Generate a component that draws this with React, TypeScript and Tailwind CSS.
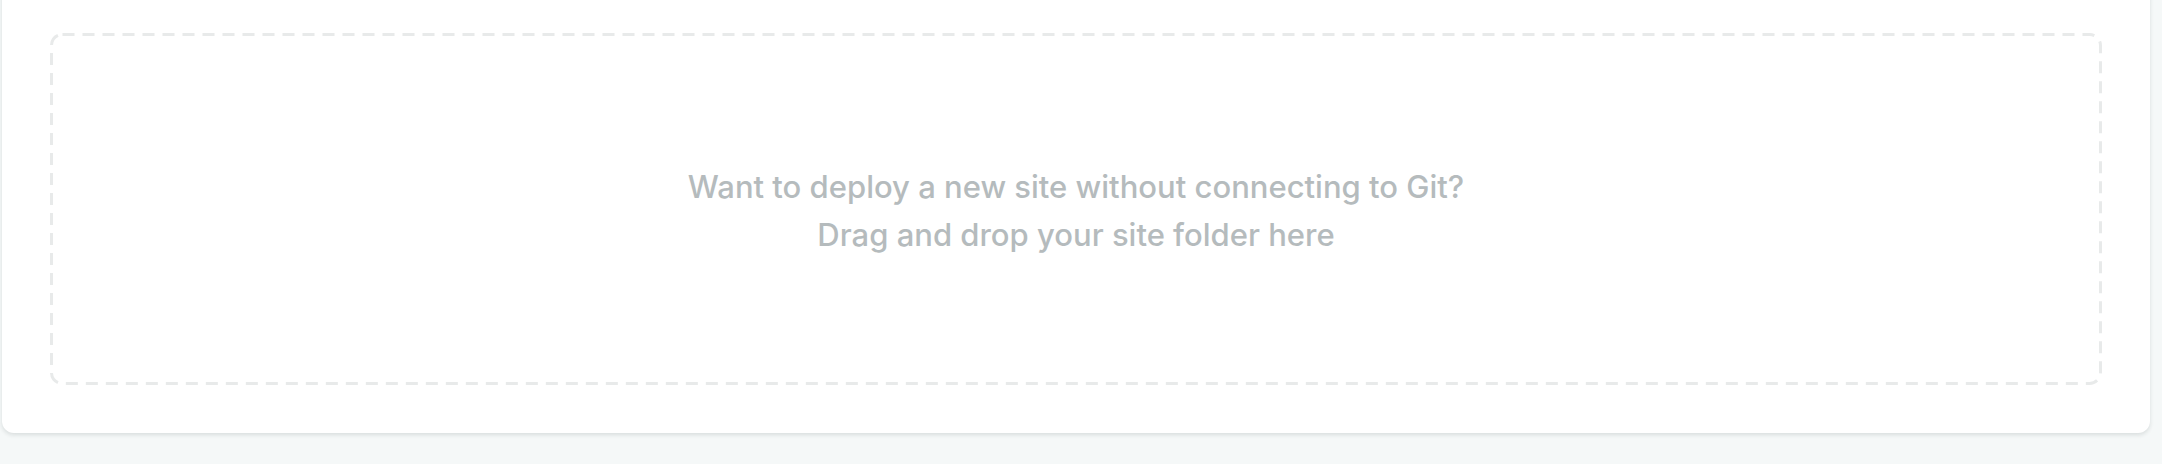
import React from "react";

export default function App() {
  return (
    <div className="w-[2162px] h-[464px] bg-[#f5f8f8] overflow-hidden" style={{ fontFamily: "Inter, 'Noto Sans', sans-serif" }}>
      <div className="ml-[2px] mr-[12px] -mt-[16px] bg-white rounded-[12px] shadow-[0_2px_4px_rgba(14,30,37,0.12)] px-[48px] pt-[49px] pb-[48px]">
        <div className="relative h-[352px] rounded-[12px] flex flex-col items-center justify-center pt-[4px]">
          <svg className="absolute inset-0 w-full h-full pointer-events-none" xmlns="http://www.w3.org/2000/svg">
            <rect x="1.5" y="1.5" width="calc(100% - 3px)" height="calc(100% - 3px)" rx="11" ry="11" fill="none" stroke="#e8eaea" strokeWidth="3" strokeDasharray="12 8" />
          </svg>
          <p className="relative text-[31px] leading-[48px] font-medium text-[#b5bbbd] text-center">
            Want to deploy a new site without connecting to Git?
            <br />
            Drag and drop your site folder here
          </p>
        </div>
      </div>
    </div>
  );
}
